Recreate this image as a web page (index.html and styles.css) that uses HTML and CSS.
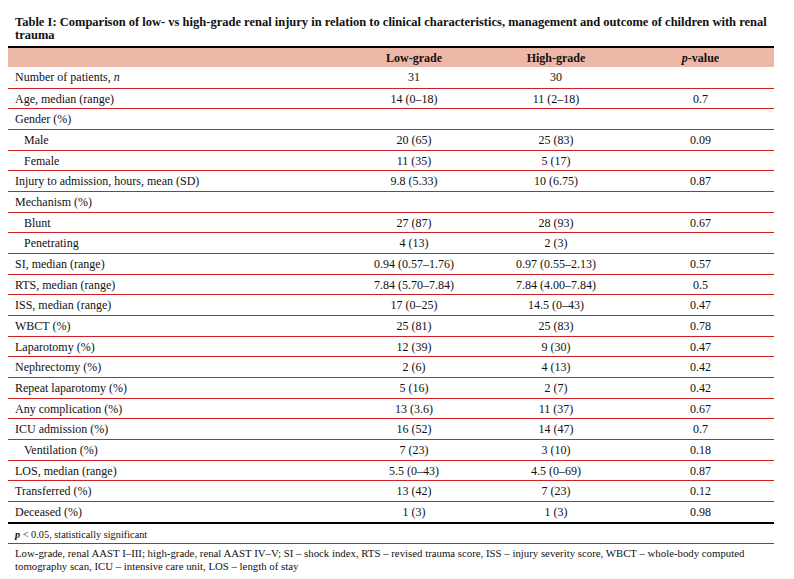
FILE: index.html
```html
<!DOCTYPE html>
<html>
<head>
<meta charset="utf-8">
<link rel="stylesheet" href="styles.css">
</head>
<body>
<div class="page">
  <h1 class="title">Table I: Comparison of low- vs high-grade renal injury in relation to clinical characteristics, management and outcome of children with renal trauma</h1>
  <table class="data">
    <thead>
      <tr>
        <th class="label"></th>
        <th>Low-grade</th>
        <th>High-grade</th>
        <th><i>p</i>-value</th>
      </tr>
    </thead>
    <tbody>
      <tr><td class="label">Number of patients, <i>n</i></td><td>31</td><td>30</td><td></td></tr>
      <tr><td class="label">Age, median (range)</td><td>14 (0–18)</td><td>11 (2–18)</td><td>0.7</td></tr>
      <tr><td class="label">Gender (%)</td><td></td><td></td><td></td></tr>
      <tr><td class="label sub">Male</td><td>20 (65)</td><td>25 (83)</td><td>0.09</td></tr>
      <tr><td class="label sub">Female</td><td>11 (35)</td><td>5 (17)</td><td></td></tr>
      <tr><td class="label">Injury to admission, hours, mean (SD)</td><td>9.8 (5.33)</td><td>10 (6.75)</td><td>0.87</td></tr>
      <tr><td class="label">Mechanism (%)</td><td></td><td></td><td></td></tr>
      <tr><td class="label sub">Blunt</td><td>27 (87)</td><td>28 (93)</td><td>0.67</td></tr>
      <tr><td class="label sub">Penetrating</td><td>4 (13)</td><td>2 (3)</td><td></td></tr>
      <tr><td class="label">SI, median (range)</td><td>0.94 (0.57–1.76)</td><td>0.97 (0.55–2.13)</td><td>0.57</td></tr>
      <tr><td class="label">RTS, median (range)</td><td>7.84 (5.70–7.84)</td><td>7.84 (4.00–7.84)</td><td>0.5</td></tr>
      <tr><td class="label">ISS, median (range)</td><td>17 (0–25)</td><td>14.5 (0–43)</td><td>0.47</td></tr>
      <tr><td class="label">WBCT (%)</td><td>25 (81)</td><td>25 (83)</td><td>0.78</td></tr>
      <tr><td class="label">Laparotomy (%)</td><td>12 (39)</td><td>9 (30)</td><td>0.47</td></tr>
      <tr><td class="label">Nephrectomy (%)</td><td>2 (6)</td><td>4 (13)</td><td>0.42</td></tr>
      <tr><td class="label">Repeat laparotomy (%)</td><td>5 (16)</td><td>2 (7)</td><td>0.42</td></tr>
      <tr><td class="label">Any complication (%)</td><td>13 (3.6)</td><td>11 (37)</td><td>0.67</td></tr>
      <tr><td class="label">ICU admission (%)</td><td>16 (52)</td><td>14 (47)</td><td>0.7</td></tr>
      <tr><td class="label sub">Ventilation (%)</td><td>7 (23)</td><td>3 (10)</td><td>0.18</td></tr>
      <tr><td class="label">LOS, median (range)</td><td>5.5 (0–43)</td><td>4.5 (0–69)</td><td>0.87</td></tr>
      <tr><td class="label">Transferred (%)</td><td>13 (42)</td><td>7 (23)</td><td>0.12</td></tr>
      <tr><td class="label">Deceased (%)</td><td>1 (3)</td><td>1 (3)</td><td>0.98</td></tr>
    </tbody>
  </table>
  <p class="sig"><b><i>p</i></b> &lt; 0.05, statistically significant</p>
  <p class="notes">Low-grade, renal AAST I–III; high-grade, renal AAST IV–V; SI – shock index, RTS – revised trauma score, ISS – injury severity score, WBCT – whole-body computed tomography scan, ICU – intensive care unit, LOS – length of stay</p>
</div>
</body>
</html>
```

FILE: styles.css
```css
html, body {
  margin: 0;
  padding: 0;
  background: #ffffff;
}

.page {
  width: 766px;
  margin: 0 0 0 8px;
  padding-top: 16px;
  font-family: "Liberation Serif", "Times New Roman", serif;
  color: #111;
}

.title {
  margin: 0 0 4px 0;
  padding: 0 4px 0 7px;
  font-size: 12.5px;
  line-height: 13px;
  font-weight: bold;
  color: #111;
}

.data {
  width: 766px;
  border-collapse: collapse;
  border-top: 2px solid #000;
  border-bottom: 2px solid #000;
  font-size: 12px;
}

.data th {
  background: #edb8a7;
  font-weight: bold;
  height: 19px;
  padding: 0 7px;
  text-align: center;
  font-size: 12px;
  line-height: 14px;
}

.data th.label {
  width: 321px;
}

.data th:nth-child(2),
.data th:nth-child(3) {
  width: 128px;
}

.data td {
  height: 19.68px;
  padding: 0 7px;
  text-align: center;
  line-height: 14px;
  border-top: 1px solid #d21e25;
}

.data tbody tr:first-child td {
  border-top: none;
  height: 20.68px;
}

.data td.label {
  text-align: left;
}

.data td.sub {
  padding-left: 16px;
}

.sig {
  margin: 0;
  padding: 4px 7px 0 7px;
  height: 15px;
  font-size: 10.3px;
  line-height: 14px;
  border-bottom: 1px solid #d21e25;
}

.notes {
  margin: 0;
  padding: 3px 7px 0 7px;
  font-size: 10.8px;
  line-height: 13px;
}
```
